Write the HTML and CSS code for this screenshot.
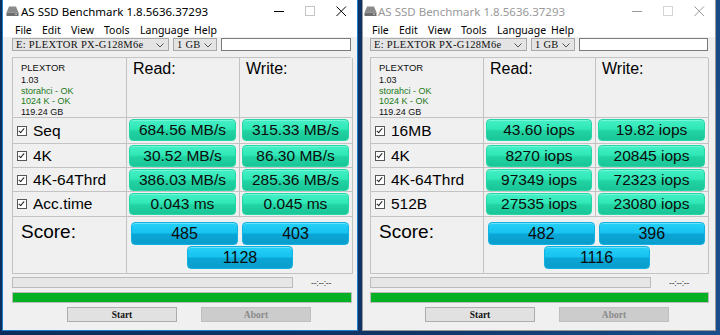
FILE: index.html
```html
<!DOCTYPE html>
<html>
<head>
<meta charset="utf-8">
<link rel="stylesheet" href="styles.css">
</head>
<body>
<div class="desk">
  <div class="win active">
    <div class="titlebar">
      <svg class="appicon" width="13" height="12" viewBox="0 0 13 12"><path d="M3 1.5 L10 1.5 L12.5 7.5 L0.5 7.5 Z" fill="#8a8a8a"/><rect x="0.5" y="7.5" width="12" height="3.5" fill="#6d6d6d"/><rect x="9" y="8.7" width="2" height="1" fill="#d0d0d0"/></svg>
      <span class="title">AS SSD Benchmark 1.8.5636.37293</span>
      <span class="caps">
        <span class="cap"><svg width="11" height="11" viewBox="0 0 11 11"><path d="M0 5.5 H10" stroke="#000" stroke-width="1"/></svg></span>
        <span class="cap"><svg width="11" height="11" viewBox="0 0 11 11"><rect x="0.5" y="0.5" width="9" height="9" fill="none" stroke="#c4c4c4"/></svg></span>
        <span class="cap"><svg width="11" height="11" viewBox="0 0 11 11"><path d="M0.5 0.5 L10 10 M10 0.5 L0.5 10" stroke="#000" stroke-width="1"/></svg></span>
      </span>
    </div>
    <div class="menu"><span>File</span><span>Edit</span><span>View</span><span>Tools</span><span>Language</span><span>Help</span></div>
    <div class="combos">
      <div class="combo drive">E: PLEXTOR PX-G128M6e<svg class="chev" width="8" height="5" viewBox="0 0 8 5"><path d="M0.5 0.5 L4 4 L7.5 0.5" fill="none" stroke="#555"/></svg></div>
      <div class="combo size">1 GB<svg class="chev" width="8" height="5" viewBox="0 0 8 5"><path d="M0.5 0.5 L4 4 L7.5 0.5" fill="none" stroke="#555"/></svg></div>
      <div class="textbox"></div>
    </div>
    <div class="grid">
      <div class="cell info">
        <div class="brand">PLEXTOR</div>
        <div>1.03</div>
        <div class="ok">storahci - OK</div>
        <div class="ok">1024 K - OK</div>
        <div>119.24 GB</div>
      </div>
      <div class="cell head">Read:</div>
      <div class="cell head">Write:</div>

      <div class="cell label"><span class="chk"></span>Seq</div>
      <div class="cell val"><div class="bar g">684.56 MB/s</div></div>
      <div class="cell val"><div class="bar g">315.33 MB/s</div></div>

      <div class="cell label"><span class="chk"></span>4K</div>
      <div class="cell val"><div class="bar g">30.52 MB/s</div></div>
      <div class="cell val"><div class="bar g">86.30 MB/s</div></div>

      <div class="cell label"><span class="chk"></span>4K-64Thrd</div>
      <div class="cell val"><div class="bar g">386.03 MB/s</div></div>
      <div class="cell val"><div class="bar g">285.36 MB/s</div></div>

      <div class="cell label"><span class="chk"></span>Acc.time</div>
      <div class="cell val"><div class="bar g">0.043 ms</div></div>
      <div class="cell val"><div class="bar g">0.045 ms</div></div>

      <div class="cell score">Score:</div>
      <div class="cell scores">
        <div class="srow"><div class="bar b">485</div><div class="bar b">403</div></div>
        <div class="bar b total">1128</div>
      </div>
    </div>
    <div class="progress"><div class="pbar"></div><span class="time">--:--:--</span></div>
    <div class="green"></div>
    <div class="buttons"><div class="btn">Start</div><div class="btn dis">Abort</div></div>
  </div>

  <div class="win inactive">
    <div class="titlebar">
      <svg class="appicon" width="13" height="12" viewBox="0 0 13 12"><path d="M3 1.5 L10 1.5 L12.5 7.5 L0.5 7.5 Z" fill="#8a8a8a"/><rect x="0.5" y="7.5" width="12" height="3.5" fill="#6d6d6d"/><rect x="9" y="8.7" width="2" height="1" fill="#d0d0d0"/></svg>
      <span class="title">AS SSD Benchmark 1.8.5636.37293</span>
      <span class="caps">
        <span class="cap"><svg width="11" height="11" viewBox="0 0 11 11"><path d="M0 5.5 H10" stroke="#999" stroke-width="1"/></svg></span>
        <span class="cap"><svg width="11" height="11" viewBox="0 0 11 11"><rect x="0.5" y="0.5" width="9" height="9" fill="none" stroke="#d4d4d4"/></svg></span>
        <span class="cap"><svg width="11" height="11" viewBox="0 0 11 11"><path d="M0.5 0.5 L10 10 M10 0.5 L0.5 10" stroke="#999" stroke-width="1"/></svg></span>
      </span>
    </div>
    <div class="menu"><span>File</span><span>Edit</span><span>View</span><span>Tools</span><span>Language</span><span>Help</span></div>
    <div class="combos">
      <div class="combo drive">E: PLEXTOR PX-G128M6e<svg class="chev" width="8" height="5" viewBox="0 0 8 5"><path d="M0.5 0.5 L4 4 L7.5 0.5" fill="none" stroke="#555"/></svg></div>
      <div class="combo size">1 GB<svg class="chev" width="8" height="5" viewBox="0 0 8 5"><path d="M0.5 0.5 L4 4 L7.5 0.5" fill="none" stroke="#555"/></svg></div>
      <div class="textbox"></div>
    </div>
    <div class="grid">
      <div class="cell info">
        <div class="brand">PLEXTOR</div>
        <div>1.03</div>
        <div class="ok">storahci - OK</div>
        <div class="ok">1024 K - OK</div>
        <div>119.24 GB</div>
      </div>
      <div class="cell head">Read:</div>
      <div class="cell head">Write:</div>

      <div class="cell label"><span class="chk"></span>16MB</div>
      <div class="cell val"><div class="bar g">43.60 iops</div></div>
      <div class="cell val"><div class="bar g">19.82 iops</div></div>

      <div class="cell label"><span class="chk"></span>4K</div>
      <div class="cell val"><div class="bar g">8270 iops</div></div>
      <div class="cell val"><div class="bar g">20845 iops</div></div>

      <div class="cell label"><span class="chk"></span>4K-64Thrd</div>
      <div class="cell val"><div class="bar g">97349 iops</div></div>
      <div class="cell val"><div class="bar g">72323 iops</div></div>

      <div class="cell label"><span class="chk"></span>512B</div>
      <div class="cell val"><div class="bar g">27535 iops</div></div>
      <div class="cell val"><div class="bar g">23080 iops</div></div>

      <div class="cell score">Score:</div>
      <div class="cell scores">
        <div class="srow"><div class="bar b">482</div><div class="bar b">396</div></div>
        <div class="bar b total">1116</div>
      </div>
    </div>
    <div class="progress"><div class="pbar"></div><span class="time">--:--:--</span></div>
    <div class="green"></div>
    <div class="buttons"><div class="btn">Start</div><div class="btn dis">Abort</div></div>
  </div>
</div>
</body>
</html>
```

FILE: styles.css
```css
html, body {
  margin: 0;
  padding: 0;
}
body {
  width: 720px;
  height: 335px;
  background: linear-gradient(100deg, #0c2c5a 0%, #0f3566 60%, #1a4f8c 100%);
  overflow: hidden;
  font-family: "Liberation Sans", Arial, sans-serif;
}
.desk {
  display: flex;
  gap: 4px;
  padding-left: 2px;
}
.win {
  box-sizing: border-box;
  height: 331px;
  background: #f0f0f0;
  display: flex;
  flex-direction: column;
}
.win.active {
  width: 356px;
  border: 1px solid #1c7fd2;
  border-top: none;
  padding: 0 6px 0 9px;
}
.win.inactive {
  width: 354px;
  border: 1px solid #9a9a9a;
  border-top: none;
  padding: 0 7px 0 7px;
}
.titlebar {
  height: 22px;
  margin: 0 -6px 0 -9px;
  background: #fff;
  display: flex;
  align-items: center;
  font-family: "Noto Sans", "Open Sans", sans-serif;
  font-size: 11.5px;
}
.inactive .titlebar {
  margin: 0 -7px;
}
.appicon {
  margin: 0 2px 0 3px;
}
.inactive .appicon {
  margin: 0 1px 0 1px;
}
.active .title { color: #000; }
.inactive .title { color: #999; }
.caps {
  margin-left: auto;
  display: flex;
}
.cap {
  width: 31px;
  height: 22px;
  display: flex;
  align-items: center;
  justify-content: center;
}
.menu {
  height: 15px;
  margin: 0 -6px 0 -9px;
  background: #fff;
  display: flex;
  align-items: center;
  font-family: "Noto Sans", "Open Sans", sans-serif;
  font-size: 10.5px;
  padding-left: 12px;
}
.inactive .menu { margin: 0 -7px; padding-left: 9px; }
.menu span { flex: none; }
.menu span:nth-child(1) { width: 27px; }
.menu span:nth-child(2) { width: 29px; }
.menu span:nth-child(3) { width: 33px; }
.menu span:nth-child(4) { width: 36px; }
.menu span:nth-child(5) { width: 54px; }
.combos {
  margin-top: 1px;
  height: 13px;
  display: flex;
  gap: 4px;
}
.combo {
  box-sizing: border-box;
  height: 13px;
  border: 1px solid #a9a9a9;
  background: #e4e4e4;
  font-family: "Liberation Serif", serif;
  font-size: 10.5px;
  line-height: 11px;
  padding-left: 3px;
  display: flex;
  align-items: center;
  position: relative;
  letter-spacing: 0.3px;
  color: #111;
}
.chev {
  position: absolute;
  right: 4px;
  top: 4px;
}
.drive { width: 157px; }
.size { width: 44px; }
.textbox {
  flex: 1;
  box-sizing: border-box;
  height: 13px;
  border: 1px solid #7a7a7a;
  background: #fff;
}
.grid {
  margin-top: 6px;
  display: grid;
  grid-template-columns: 114px 113px 113px;
  grid-template-rows: 60px 26px 24px 24px 25px 57px;
  border-top: 1px solid #c3c3c3;
  border-left: 1px solid #c3c3c3;
}
.inactive .grid {
  grid-template-columns: 113px 112px 113px;
}
.cell {
  box-sizing: border-box;
  border-right: 1px solid #c3c3c3;
  border-bottom: 1px solid #c3c3c3;
  min-width: 0;
}
.info {
  padding: 3px 0 0 8px;
  font-size: 9px;
  line-height: 10.5px;
  color: #111;
}
.brand {
  font-size: 9.5px;
  line-height: 13px;
  margin-bottom: 1px;
}
.ok { color: #1a7a1a; }
.head {
  font-size: 16px;
  padding: 2px 0 0 6px;
  color: #000;
}
.label {
  display: flex;
  align-items: center;
  font-size: 15.5px;
  padding-left: 4px;
  color: #000;
}
.chk {
  box-sizing: border-box;
  width: 10px;
  height: 10px;
  border: 1px solid #555;
  background: #fff;
  margin-right: 6px;
  position: relative;
}
.chk::after {
  content: "";
  position: absolute;
  left: 2px;
  top: 0px;
  width: 2px;
  height: 5px;
  border-right: 1px solid #222;
  border-bottom: 1px solid #222;
  transform: rotate(40deg);
}
.val {
  padding: 1px 3px 1px 2px;
}
.bar {
  box-sizing: border-box;
  border-radius: 4px;
  display: flex;
  align-items: center;
  justify-content: center;
  font-size: 15.5px;
  color: #0c0c0c;
}
.bar.g {
  height: 22px;
  background: linear-gradient(#45efc6 0%, #2fe8b6 45%, #21d3a2 55%, #1bc597 100%);
  border: 1px solid #24d7a6;
  box-shadow: inset 0 1px 0 #6ff6d6;
}
.bar.b {
  height: 23px;
  font-size: 16px;
  background: linear-gradient(#25d2f8 0%, #17c2ef 48%, #0aa6d6 52%, #0b9dcc 100%);
  border: 1px solid #10b2e4;
  box-shadow: inset 0 1px 0 #6ae0fb;
}
.score {
  font-size: 19px;
  padding: 4px 0 0 8px;
  color: #000;
}
.scores {
  grid-column: span 2;
  padding: 5px 3px 0 4px;
  display: flex;
  flex-direction: column;
  align-items: center;
}
.srow {
  display: flex;
  gap: 4px;
  width: 100%;
}
.srow .bar { flex: 1; }
.total {
  margin-top: 1px;
  width: 106px;
  height: 24px;
}
.progress {
  margin-top: 3px;
  height: 11px;
  display: flex;
  align-items: center;
}
.pbar {
  box-sizing: border-box;
  width: 281px;
  height: 11px;
  background: #e6e6e6;
  border: 1px solid #bcbcbc;
}
.time {
  margin-left: 18px;
  font-size: 8.5px;
  color: #333;
  letter-spacing: -0.2px;
}
.green {
  margin-top: 4px;
  box-sizing: border-box;
  height: 11px;
  background: #06b025;
  border: 1px solid #bcbcbc;
  margin-right: -1px;
}
.buttons {
  margin-top: 4px;
  display: flex;
  gap: 24px;
  padding-left: 55px;
}
.btn {
  box-sizing: border-box;
  width: 110px;
  height: 15px;
  border: 1px solid #adadad;
  background: #e1e1e1;
  font-family: "Liberation Serif", serif;
  font-weight: bold;
  font-size: 9.5px;
  display: flex;
  align-items: center;
  justify-content: center;
  color: #111;
}
.btn.dis {
  background: #cccccc;
  border-color: #bfbfbf;
  color: #8a8a8a;
}
```
